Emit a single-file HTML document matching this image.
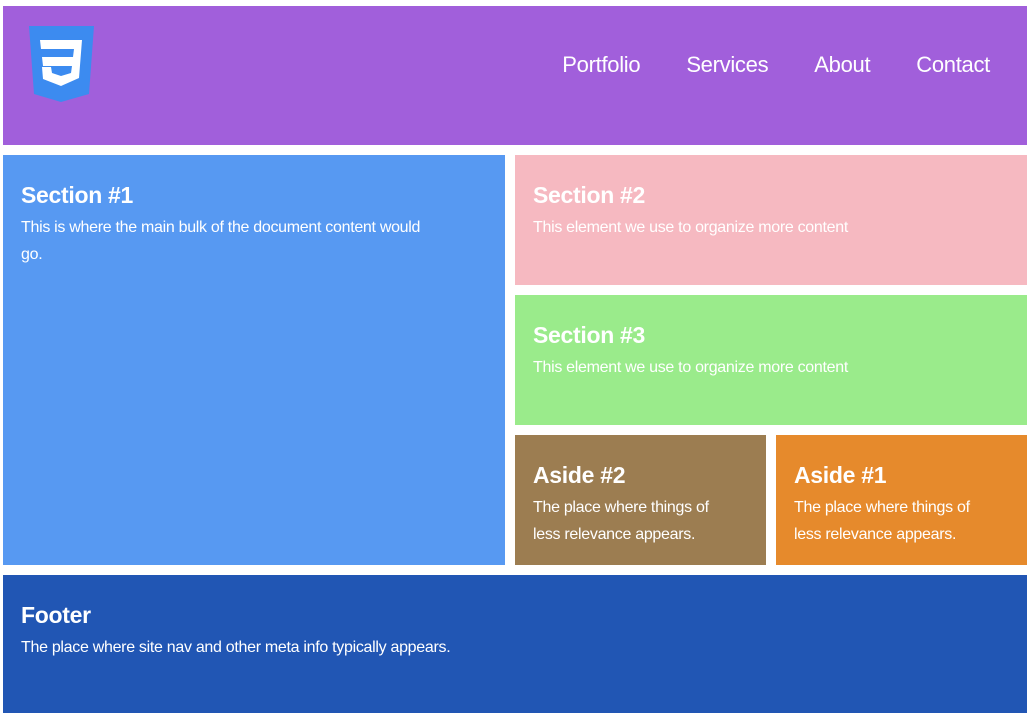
<!DOCTYPE html>
<html><head><style>
*{margin:0;padding:0;box-sizing:border-box}
body{width:1029px;height:720px;background:#fff;font-family:"Liberation Sans",sans-serif;color:#fff;position:relative;overflow:hidden}
.b{position:absolute;padding:26px 18px}
h2{font-size:23px;font-weight:bold;line-height:28px;margin-bottom:5px;letter-spacing:-0.3px}
p{font-size:16px;line-height:27px;letter-spacing:-0.3px}
nav{position:absolute;top:52px;right:39px;font-size:22px;display:flex;gap:46px;letter-spacing:-0.3px}
</style></head><body>
<div style="position:absolute;left:3px;top:6px;width:1024px;height:139px;background:#a15fdb"></div>
<svg style="position:absolute;left:29px;top:26px" width="65" height="76" viewBox="0 0 65 76">
<path d="M0 0H65L60 68L32 76L5 68Z" fill="#3c8bf0"/>
<path d="M11 14H53L50 52L32 60L14 53L13 41H22L23 47L32 50L42 47L43 40H14L13 31H44L45 23H12Z" fill="#fff"/>
</svg>
<nav><span>Portfolio</span><span>Services</span><span>About</span><span>Contact</span></nav>
<div class="b" style="left:3px;top:155px;width:502px;height:410px;background:#5799f2"><h2>Section #1</h2><p>This is where the main bulk of the document content would<br>go.</p></div>
<div class="b" style="left:515px;top:155px;width:512px;height:130px;background:#f6b9c1"><h2>Section #2</h2><p>This element we use to organize more content</p></div>
<div class="b" style="left:515px;top:295px;width:512px;height:130px;background:#9aeb8b"><h2>Section #3</h2><p>This element we use to organize more content</p></div>
<div class="b" style="left:515px;top:435px;width:251px;height:130px;background:#9c7d51"><h2>Aside #2</h2><p style="max-width:200px">The place where things of less relevance appears.</p></div>
<div class="b" style="left:776px;top:435px;width:251px;height:130px;background:#e68a2c"><h2>Aside #1</h2><p style="max-width:200px">The place where things of less relevance appears.</p></div>
<div class="b" style="left:3px;top:575px;width:1024px;height:138px;background:#2156b4"><h2>Footer</h2><p>The place where site nav and other meta info typically appears.</p></div>
</body></html>
